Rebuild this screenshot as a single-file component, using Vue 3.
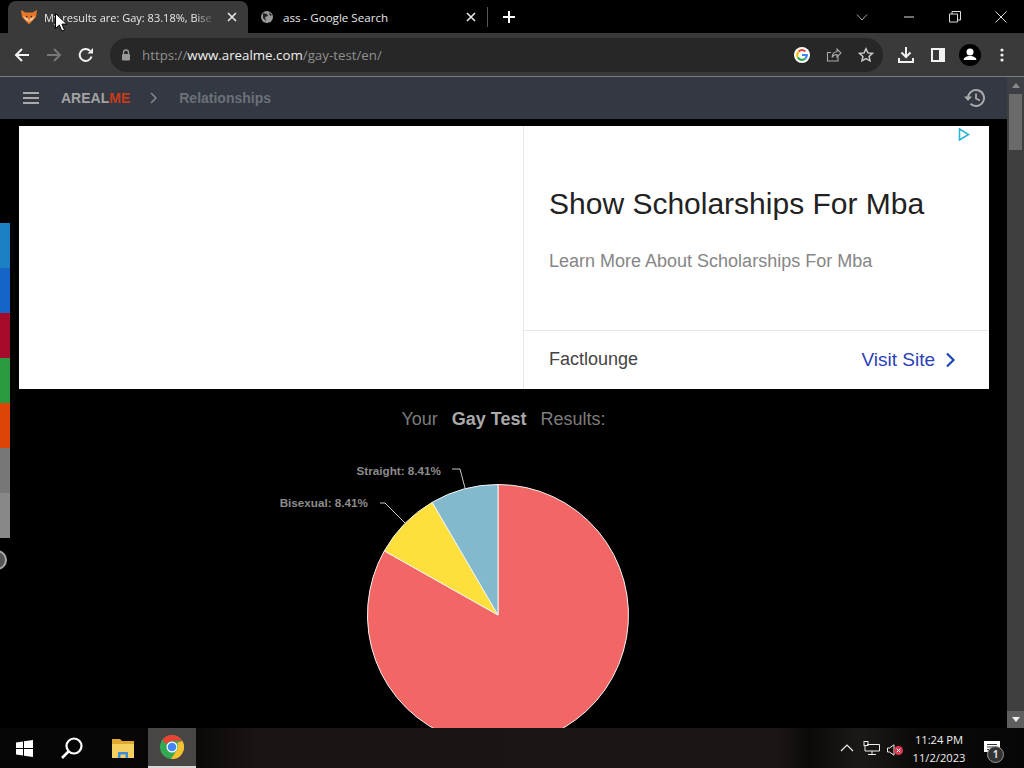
<script setup>
const shareColors = ['#1b7fc4', '#1565c8', '#a50a2a', '#2a9a3e', '#dd4408', '#777777', '#888888']

const cx = 498
const cy = 538
const r = 130.5
// pie is drawn counter-clockwise from 12 o'clock
const point = (deg) => {
  const a = (deg * Math.PI) / 180
  return `${(cx - r * Math.sin(a)).toFixed(1)} ${(cy - r * Math.cos(a)).toFixed(1)}`
}
const slice = (from, to, large) =>
  `M${cx} ${cy}L${point(from)}A${r} ${r} 0 ${large} 0 ${point(to)}Z`

const slices = [
  { d: slice(60.6, 360, 1), fill: '#f26666' },
  { d: slice(30.3, 60.6, 0), fill: '#fde03b' },
  { d: slice(0, 30.3, 0), fill: '#83b9cd' }
]
</script>

<template>
  <div class="screen">
    <div class="tabstrip">
      <div class="tab active">
        <svg class="favicon" width="18" height="16" viewBox="0 0 18 16">
          <path d="M1 1l4.500 2.500h7L17 1l-1 7-7 7.500L2 8z" fill="#e8772a" />
          <path d="M3 7l5 2.500L9 13 5.500 11zM15 7l-5 2.500L9 13l3.500-2z" fill="#f6c79a" />
          <path d="M6 6.500l2 1.500-2 .5zM12 6.500L10 8l2 .5z" fill="#3b2314" />
        </svg>
        <span class="tab-title">My results are: Gay: 83.18%, Bise</span>
        <svg class="tab-x" width="10" height="10" viewBox="0 0 10 10"><path d="M1 1l8 8M9 1L1 9" stroke="#e8e8e8" stroke-width="1.600" /></svg>
      </div>
      <div class="tab second">
        <svg class="globe" width="14" height="14" viewBox="0 0 14 14">
          <circle cx="7" cy="7" r="6" fill="#9a9a9a" />
          <path d="M3 3l4 1 1 2-3 1 1 4-3-3zM9 2l3 3-2 1z" fill="#222" />
        </svg>
        <span class="tab-title plain">ass - Google Search</span>
        <svg class="tab-x" width="10" height="10" viewBox="0 0 10 10"><path d="M1 1l8 8M9 1L1 9" stroke="#e8e8e8" stroke-width="1.600" /></svg>
      </div>
      <div class="tab-sep"></div>
      <svg class="new-tab" width="14" height="14" viewBox="0 0 14 14"><path d="M7 1v12M1 7h12" stroke="#fff" stroke-width="2" /></svg>
      <div class="window-btns">
        <svg width="14" height="14" viewBox="0 0 14 14"><path d="M2 4.500l5 5.500 5-5.500" fill="none" stroke="#aaa" /></svg>
        <svg width="12" height="12" viewBox="0 0 12 12"><path d="M1 6h10" stroke="#ddd" /></svg>
        <svg width="12" height="12" viewBox="0 0 12 12"><path d="M.5 3h8v8h-8zM3 3V.5h8.500V9H8.500" fill="none" stroke="#ddd" /></svg>
        <svg width="12" height="12" viewBox="0 0 12 12"><path d="M.5.500l11 11M11.500.500l-11 11" stroke="#ddd" /></svg>
      </div>
    </div>

    <div class="toolbar">
      <svg class="nav" width="16" height="16" viewBox="0 0 16 16"><path d="M15 8H2M8 2L2 8l6 6" fill="none" stroke="#f2f2f2" stroke-width="2" /></svg>
      <svg class="nav" width="16" height="16" viewBox="0 0 16 16"><path d="M1 8h13M8 2l6 6-6 6" fill="none" stroke="#777" stroke-width="2" /></svg>
      <svg class="nav" width="16" height="16" viewBox="0 0 16 16"><path d="M13.500 9.500A6 6 0 1 1 12 3.800" fill="none" stroke="#f2f2f2" stroke-width="2" /><path d="M9.500 6.500H15V1z" fill="#f2f2f2" /></svg>
      <div class="omnibox">
        <svg width="10" height="12" viewBox="0 0 10 12"><path d="M2.500 5V3.500a2.500 2.500 0 0 1 5 0V5" fill="none" stroke="#999" stroke-width="1.300" /><rect x="1" y="5" width="8" height="6.500" rx="1" fill="#999" /></svg>
        <div class="url">https://<b>www.arealme.com</b>/gay-test/en/</div>
        <svg class="g-logo" width="16" height="16" viewBox="0 0 16 16">
          <circle cx="8" cy="8" r="8" fill="#fff" />
          <path d="M4.700 4.500A4.800 4.800 0 0 1 11.300 4.500" fill="none" stroke="#ea4335" stroke-width="2.200" />
          <path d="M3.200 8a4.800 4.800 0 0 1 1.500-3.500" fill="none" stroke="#fbbc05" stroke-width="2.200" />
          <path d="M3.200 8a4.800 4.800 0 0 0 .6 2.400" fill="none" stroke="#fbbc05" stroke-width="2.200" />
          <path d="M3.800 10.400A4.800 4.800 0 0 0 11.400 11.400" fill="none" stroke="#34a853" stroke-width="2.200" />
          <path d="M11.400 11.400A4.800 4.800 0 0 0 12.800 8H8" fill="none" stroke="#4285f4" stroke-width="2.200" />
        </svg>
        <svg class="omni-icon" width="16" height="16" viewBox="0 0 16 16"><path d="M12 9v5H1.500V5.500H5M6 10.500C6.500 6.500 9 4.800 11 4.800V2l4 4-4 4V7.500c-2 0-4 1-5 3z" fill="none" stroke="#a8a8a8" stroke-width="1.100" /></svg>
        <svg class="omni-icon" width="16" height="16" viewBox="0 0 16 16"><path d="M8 1.800l1.900 4.100 4.500.5-3.300 3 .9 4.400L8 11.600l-4 2.200.9-4.400-3.300-3 4.500-.5z" fill="none" stroke="#c8c8c8" stroke-width="1.500" /></svg>
      </div>
      <div class="tool-icons">
        <svg width="16" height="16" viewBox="0 0 16 16"><path d="M8 0v9M3.500 5.500L8 10l4.500-4.500" fill="none" stroke="#f2f2f2" stroke-width="2" /><path d="M1 11v4h14v-4" fill="none" stroke="#f2f2f2" stroke-width="2" /></svg>
        <svg class="panel-icon" width="14" height="14" viewBox="0 0 14 14"><path d="M0 0h14v14H0zM2 2v10h6V2z" fill="#f2f2f2" fill-rule="evenodd" /></svg>
        <svg class="avatar" width="22" height="22" viewBox="0 0 22 22"><circle cx="11" cy="11" r="11" fill="#000" /><circle cx="11" cy="8" r="3.500" fill="#fff" /><path d="M4.500 16c.5-3 3.500-4 6.500-4s6 1 6.500 4z" fill="#fff" /></svg>
        <svg class="dots" width="4" height="14" viewBox="0 0 4 14"><circle cx="2" cy="2" r="1.600" fill="#eee" /><circle cx="2" cy="7" r="1.600" fill="#eee" /><circle cx="2" cy="12" r="1.600" fill="#eee" /></svg>
      </div>
    </div>

    <div class="main">
      <div class="page">
        <div class="sitebar">
          <svg width="16" height="12" viewBox="0 0 16 12"><path d="M0 1h16M0 6h16M0 11h16" stroke="#aaa" stroke-width="2" /></svg>
          <div class="brand">AREAL<span>ME</span></div>
          <svg class="crumb-arrow" width="8" height="12" viewBox="0 0 8 12"><path d="M1 1l5 5-5 5" fill="none" stroke="#888" stroke-width="1.500" /></svg>
          <div class="crumb">Relationships</div>
          <svg class="history" width="22" height="20" viewBox="0 0 22 20">
            <path d="M4 10a8 8 0 1 1 2.500 5.800" fill="none" stroke="#aaa" stroke-width="2" />
            <path d="M0 8.500h8L4 13z" fill="#aaa" />
            <path d="M12 5.500V10.500l4 2" fill="none" stroke="#aaa" stroke-width="1.800" />
          </svg>
        </div>

        <div class="ad">
          <div class="ad-blank"></div>
          <div class="ad-pane">
            <svg class="ad-badge" width="12" height="13" viewBox="0 0 12 13"><path d="M1.500 1l9 5.500-9 5.500z" fill="none" stroke="#2cb5d6" stroke-width="1.600" /></svg>
            <div class="ad-body">
              <div class="ad-title">Show Scholarships For Mba</div>
              <div class="ad-sub">Learn More About Scholarships For Mba</div>
            </div>
            <div class="ad-foot">
              <span class="ad-name">Factlounge</span>
              <span class="ad-link">Visit Site
                <svg width="11" height="16" viewBox="0 0 11 16"><path d="M2 1.500L8.500 8 2 14.500" fill="none" stroke="#1a46b8" stroke-width="2.200" /></svg>
              </span>
            </div>
          </div>
        </div>

        <div class="result-title">Your <b>Gay Test</b> Results:</div>

        <svg class="chart" width="1007" height="651" viewBox="0 0 1007 651">
          <path v-for="s in slices" :key="s.fill" :d="s.d" :fill="s.fill" stroke="#f4f4f4" stroke-width="1" />
          <path d="M452 392h8l5 19M380 426h5l20 20" fill="none" stroke="#c8c8c8" stroke-width="1" />
          <text class="pie-label" x="441" y="398" text-anchor="end">Straight: 8.41%</text>
          <text class="pie-label" x="368" y="430" text-anchor="end">Bisexual: 8.41%</text>
        </svg>

        <div class="share-bar">
          <div v-for="c in shareColors" :key="c" class="share-item" :style="{ background: c }"></div>
        </div>
        <div class="share-toggle"></div>
      </div>

      <div class="scrollbar">
        <div class="sb-top"><i class="arrow-up"></i></div>
        <div class="sb-thumb"></div>
        <div class="sb-track"></div>
        <div class="sb-bottom"><i class="arrow-down"></i></div>
      </div>
    </div>

    <div class="taskbar">
      <svg class="task-win" width="17" height="17" viewBox="0 0 17 17"><path d="M0 2.400l7-1v6.600H0zM8 1.200L17 0v8H8zM0 9h7v6.600l-7-1zM8 9h9v8l-9-1.200z" fill="#fff" /></svg>
      <svg class="task-search" width="24" height="24" viewBox="0 0 24 24"><circle cx="14" cy="10" r="7.500" fill="none" stroke="#fff" stroke-width="2.200" /><path d="M8.500 15.500L2 22" stroke="#fff" stroke-width="2.600" /></svg>
      <svg class="task-folder" width="22" height="20" viewBox="0 0 22 20">
        <path d="M0 1h8l2 2h12v17H0z" fill="#e0a92e" />
        <path d="M0 6h22v14H0z" fill="#f5cf5f" />
        <path d="M6 20v-6h10v6h-2.500v-3.500h-5V20z" fill="#3f8fd8" />
      </svg>
      <div class="task-chrome">
        <svg width="24" height="24" viewBox="0 0 24 24">
          <circle cx="12" cy="12" r="12" fill="#34a853" />
          <path d="M12 0a12 12 0 0 1 10.400 6H12a6 6 0 0 0-5.500 3.500L2.400 4.800A12 12 0 0 1 12 0z" fill="#ea4335" />
          <path d="M22.400 6A12 12 0 0 1 11 24l5.200-8A6 6 0 0 0 17 8z" fill="#fbc02d" />
          <circle cx="12" cy="12" r="5.500" fill="#fff" />
          <circle cx="12" cy="12" r="4.300" fill="#4285f4" />
        </svg>
      </div>
      <div class="tray">
        <svg width="14" height="8" viewBox="0 0 14 8"><path d="M1 7l6-6 6 6" fill="none" stroke="#eee" stroke-width="1.200" /></svg>
        <svg class="tray-net" width="17" height="14" viewBox="0 0 17 14"><path d="M4 3.500h12.500V10H2V5M9 10v3M5 13.500h8" fill="none" stroke="#eee" /><rect x="1" y=".5" width="4" height="4" fill="none" stroke="#eee" /></svg>
        <div class="tray-vol">
          <svg width="8" height="12" viewBox="0 0 8 12"><path d="M.5 4h2L7 .8v10.400L2.500 8h-2z" fill="none" stroke="#eee" /></svg>
          <svg class="vol-x" width="9" height="9" viewBox="0 0 9 9"><circle cx="4.500" cy="4.500" r="4.500" fill="#d83a50" /><path d="M2.800 2.800l3.400 3.400M6.200 2.800L2.800 6.200" stroke="#fff" /></svg>
        </div>
        <div class="clock">
          <div>11:24 PM</div>
          <div>11/2/2023</div>
        </div>
        <div class="notify">
          <svg width="16" height="14" viewBox="0 0 16 14"><path d="M0 0h16v11H8l-3 3v-3H0z" fill="#fff" /><path d="M3 3.500h10M3 6h10M3 8.500h6" stroke="#333" /></svg>
          <span class="notify-count">1</span>
        </div>
      </div>
    </div>

    <svg class="cursor" width="12" height="19" viewBox="0 0 12 19"><path d="M.5.500v15l3.800-3.400 2.600 6 2.600-1.100-2.600-5.900h5z" fill="#fff" stroke="#000" /></svg>
  </div>
</template>

<style scoped>
.screen {
  position: relative;
  width: 1024px;
  height: 768px;
  overflow: hidden;
  background: #000;
  display: flex;
  flex-direction: column;
  font-family: "Liberation Sans", Arial, sans-serif;
}

/* browser chrome */
.tabstrip { height: 33px; padding: 1px 0 0 8px; box-sizing: border-box; display: flex; align-items: stretch; background: #000; }
.tab { display: flex; align-items: center; color: #e8e8e8; font: 11.6px "Open Sans", sans-serif; }
.tab.active { width: 240px; background: #3a3a3a; border-radius: 8px 8px 0 0; padding: 0 11px 0 12px; box-sizing: border-box; font-size: 11px; }
.tab.second { width: 239px; padding: 0 11px 0 12px; box-sizing: border-box; }
.favicon { margin-right: 6px; flex-shrink: 0; }
.globe { margin-right: 9px; flex-shrink: 0; }
.tab-title { flex: 1; min-width: 0; white-space: nowrap; overflow: hidden; -webkit-mask-image: linear-gradient(90deg, #000 88%, transparent); mask-image: linear-gradient(90deg, #000 88%, transparent); }
.tab-title.plain { -webkit-mask-image: none; mask-image: none; }
.tab-x { flex-shrink: 0; margin-left: 12px; }
.tab-sep { width: 1px; height: 20px; background: #555; align-self: center; }
.new-tab { align-self: center; margin-left: 14px; }
.window-btns { margin-left: auto; display: flex; align-items: center; gap: 34px; padding-right: 17px; }

.toolbar { height: 44px; background: #3a3a3a; border-bottom: 1px solid #7c7c7c; box-sizing: border-box; display: flex; align-items: center; padding-left: 14px; }
.nav { margin-right: 16px; flex-shrink: 0; }
.omnibox { width: 773px; height: 34px; background: #272727; border-radius: 17px; box-sizing: border-box; padding: 0 9px 0 11px; display: flex; align-items: center; color: #8f8f8f; margin-left: 0; }
.url { flex: 1; margin-left: 11px; font: 13.3px "Open Sans", sans-serif; }
.url b { font-weight: 400; color: #f0f0f0; }
.g-logo { margin-right: 16px; }
.omni-icon { margin-right: 16px; }
.omni-icon:last-child { margin-right: 0; }
.tool-icons { flex: 1; display: flex; align-items: center; padding-left: 15px; }
.panel-icon { margin-left: 17px; }
.avatar { margin-left: 14px; }
.dots { margin-left: 19px; }

.main { flex: 1; min-height: 0; display: flex; }
.page { position: relative; flex: 1; min-width: 0; overflow: hidden; background: #000; }

.sitebar { height: 42px; background: #333842; display: flex; align-items: center; padding: 0 21px 0 23px; font-weight: 700; font-size: 14px; }
.brand { margin-left: 22px; color: #a2a2a2; }
.brand span { color: #c8391a; }
.crumb-arrow { margin-left: 20px; }
.crumb { margin-left: 21px; color: #6c7078; }
.history { margin-left: auto; }

.ad { margin: 7px 0 0 19px; width: 970px; height: 263px; background: #fff; display: flex; }
.ad-blank { width: 504px; }
.ad-pane { position: relative; flex: 1; border-left: 1px solid #e6e6e6; display: flex; flex-direction: column; }
.ad-badge { position: absolute; top: 2px; right: 19px; }
.ad-body { flex: 1; padding: 60px 0 0 25px; }
.ad-title { font-size: 30px; line-height: 36px; color: #222; }
.ad-sub { margin-top: 28px; font-size: 18px; line-height: 22px; color: #868686; }
.ad-foot { height: 59px; box-sizing: border-box; border-top: 1px solid #e6e6e6; padding: 0 33px 2px 25px; display: flex; align-items: center; justify-content: space-between; }
.ad-name { font-size: 18px; color: #444; }
.ad-link { display: flex; align-items: center; gap: 10px; margin-top: 1px; font-size: 19px; color: #2a3fb8; }

.result-title { margin: 19px 0 0; text-align: center; font-size: 18px; line-height: 22px; color: #7c7c7c; }
.result-title b { color: #aaa; margin: 0 9px; }

.chart { position: absolute; left: 0; top: 0; }
.pie-label { font: 700 11.7px "Liberation Sans", Arial, sans-serif; fill: #8c8c8c; }

.share-bar { position: absolute; left: 0; top: 146px; width: 10px; display: flex; flex-direction: column; }
.share-item { height: 45px; }
.share-toggle { position: absolute; left: -13px; top: 473px; width: 16px; height: 16px; border-radius: 50%; background: #555; border: 2px solid #aaa; }

.scrollbar { width: 17px; display: flex; flex-direction: column; background: #3f3f3f; }
.sb-top { height: 17px; background: #3c3f46; display: flex; justify-content: center; align-items: center; }
.sb-thumb { height: 56px; margin: 0 2px; background: #6a6a6a; }
.sb-track { flex: 1; }
.sb-bottom { height: 17px; background: #5e5e5e; display: flex; justify-content: center; align-items: center; }
.arrow-up { border: 4px solid transparent; border-top: 0; border-bottom: 5px solid #8a8a8a; }
.arrow-down { border: 4px solid transparent; border-bottom: 0; border-top: 5px solid #f0f0f0; }

/* windows taskbar */
.taskbar { height: 40px; flex-shrink: 0; display: flex; align-items: center; background: linear-gradient(90deg, #060505 0%, #080606 18%, #1a1412 25%, #1b1613 76%, #0c0a09 79%, #1c1816 84%, #0a0908 90%, #060606 100%); }
.task-win { margin-left: 16px; }
.task-search { margin-left: 27px; }
.task-folder { margin-left: 28px; }
.task-chrome { width: 48px; height: 40px; margin-left: 14px; box-sizing: border-box; background: #4a4545; border-bottom: 2px solid #d8d8d8; display: flex; align-items: center; justify-content: center; }
.tray { margin-left: auto; display: flex; align-items: center; color: #eee; }
.tray-net { margin-left: 9px; }
.tray-vol { position: relative; margin-left: 7px; width: 11px; height: 12px; }
.vol-x { position: absolute; left: 7px; top: 4px; }
.clock { width: 82px; padding-top: 2px; font: 11.2px/18px "Open Sans", sans-serif; text-align: center; }
.notify { position: relative; width: 16px; height: 14px; margin: 0 24px 0 4px; }
.notify-count { position: absolute; left: 3px; top: 5px; width: 15px; height: 15px; border-radius: 50%; background: #333; border: 1px solid #999; font: 700 10px/15px "Open Sans", sans-serif; text-align: center; color: #ddd; }

.cursor { position: absolute; left: 55px; top: 13px; }
</style>

<style>
html, body { background: #000; overflow: hidden; }
</style>
